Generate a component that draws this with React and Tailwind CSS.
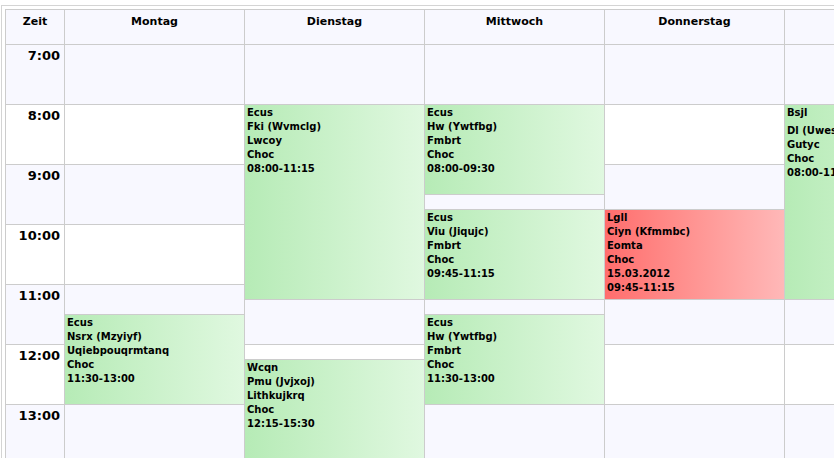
import React from "react";

const FONT = "font-['DejaVu_Sans',Verdana,sans-serif]";

// span in quarter hours -> height (15px per quarter minus the 1px line)
const HEIGHT = {
  1: "h-[14px]",
  2: "h-[29px]",
  3: "h-[44px]",
  4: "h-[59px]",
  5: "h-[74px]",
  6: "h-[89px]",
  7: "h-[104px]",
  8: "h-[119px]",
  13: "h-[194px]",
};

const GREEN = "bg-gradient-to-r from-[#b6ebb6] to-[#e0f8e0]";
const RED = "bg-gradient-to-r from-[#ff6d6d] to-[#ffb8b8]";

// empty slots, split on every full hour
function fill(from, to) {
  const out = [];
  let q = from;
  while (q < to) {
    const next = Math.min(to, Math.floor(q / 4) * 4 + 4);
    out.push({ q, n: next - q });
    q = next;
  }
  return out;
}

const ev = (q, n, lines, extra = {}) => ({ q, n, lines, ...extra });

const DAYS = [
  {
    name: "Montag",
    slots: [
      ...fill(0, 18),
      ev(18, 6, ["Ecus", "Nsrx (Mzyiyf)", "Uqiebpouqrmtanq", "Choc", "11:30-13:00"]),
      ...fill(24, 28),
    ],
  },
  {
    name: "Dienstag",
    slots: [
      ...fill(0, 4),
      ev(4, 13, ["Ecus", "Fki (Wvmclg)", "Lwcoy", "Choc", "08:00-11:15"]),
      ...fill(17, 21),
      ev(21, 7, ["Wcqn", "Pmu (Jvjxoj)", "Lithkujkrq", "Choc", "12:15-15:30"]),
    ],
  },
  {
    name: "Mittwoch",
    slots: [
      ...fill(0, 4),
      ev(4, 6, ["Ecus", "Hw (Ywtfbg)", "Fmbrt", "Choc", "08:00-09:30"]),
      ...fill(10, 11),
      ev(11, 6, ["Ecus", "Viu (Jiqujc)", "Fmbrt", "Choc", "09:45-11:15"]),
      ...fill(17, 18),
      ev(18, 6, ["Ecus", "Hw (Ywtfbg)", "Fmbrt", "Choc", "11:30-13:00"]),
      ...fill(24, 28),
    ],
  },
  {
    name: "Donnerstag",
    slots: [
      ...fill(0, 11),
      ev(11, 6, ["Lgll", "Ciyn (Kfmmbc)", "Eomta", "Choc", "15.03.2012", "09:45-11:15"], { red: true }),
      ...fill(17, 28),
    ],
  },
  {
    name: "Freitag",
    slots: [
      ...fill(0, 4),
      ev(4, 13, ["Bsjl", "Dl (Uwesqk)", "Gutyc", "Choc", "08:00-11:15"], { split: true }),
      ...fill(17, 28),
    ],
  },
];

const HOURS = [7, 8, 9, 10, 11, 12, 13];

const hourBg = (h) => (h % 2 ? "bg-[#f8f8ff]" : "bg-white");

function Slot({ slot }) {
  const h = HEIGHT[slot.n];
  if (!slot.lines) {
    return <div className={`${h} shrink-0 ${hourBg(7 + Math.floor(slot.q / 4))}`} />;
  }
  return (
    <div
      className={`${h} shrink-0 overflow-hidden whitespace-nowrap pl-[2px] pt-px text-[10px] font-bold leading-[14px] text-black ${
        slot.red ? RED : GREEN
      }`}
    >
      {slot.lines.map((line, i) => (
        <div key={i} className={slot.split && i === 0 ? "mb-1" : ""}>
          {line}
        </div>
      ))}
    </div>
  );
}

export default function App() {
  return (
    <div className={`h-screen w-full overflow-hidden bg-white ${FONT}`}>
      <div className="ml-px mt-[5px] border-l border-t border-[#d4d4d4] pl-[3px] pt-[3px]">
        <div className="flex w-max gap-px border border-[#cccccc] bg-[#cccccc]">
          <div className="flex w-[58px] shrink-0 flex-col gap-px">
            <div className="h-[34px] bg-[#f8f8ff] pt-[4px] text-center text-[11px] font-bold leading-[15px] text-black">
              Zeit
            </div>
            {HOURS.map((h) => (
              <div
                key={h}
                className={`h-[59px] shrink-0 pr-[4px] pt-[3px] text-right text-[13px] font-bold leading-[16px] text-black ${hourBg(h)}`}
              >
                {h}:00
              </div>
            ))}
          </div>
          {DAYS.map((day) => (
            <div key={day.name} className="flex w-[179px] shrink-0 flex-col gap-px">
              <div className="h-[34px] bg-[#f8f8ff] pt-[4px] text-center text-[11px] font-bold leading-[15px] text-black">
                {day.name}
              </div>
              {day.slots.map((slot) => (
                <Slot key={slot.q} slot={slot} />
              ))}
            </div>
          ))}
        </div>
      </div>
    </div>
  );
}
